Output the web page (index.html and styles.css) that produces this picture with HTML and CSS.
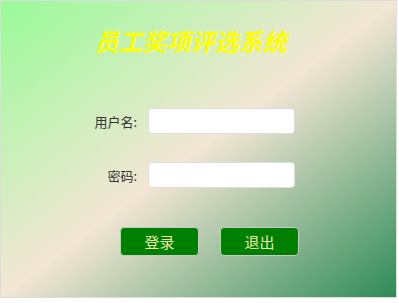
FILE: index.html
```html
<!DOCTYPE html>
<html lang="zh">
<head>
<meta charset="utf-8">
<title>员工奖项评选系统</title>
<link rel="stylesheet" href="styles.css">
</head>
<body>
<div class="panel">
  <h1 class="title">员工奖项评选系统</h1>
  <form class="form">
    <label class="label" for="user">用户名:</label>
    <input class="field" id="user" type="text">
    <label class="label" for="pwd">密码:</label>
    <input class="field" id="pwd" type="password">
  </form>
  <div class="actions">
    <button class="btn" type="button">登录</button>
    <button class="btn" type="button">退出</button>
  </div>
</div>
</body>
</html>
```

FILE: styles.css
```css
html, body {
  margin: 0;
  padding: 0;
  background: #ffffff;
}
body {
  font-family: "Noto Sans CJK SC", "Noto Sans", sans-serif;
}
.panel {
  width: 395px;
  height: 296px;
  border: 1px solid #dcdcdc;
  background: linear-gradient(to bottom right, #98fb98 0%, #f3e6d5 50%, #2e8b57 100%);
  display: flex;
  flex-direction: column;
}
.title {
  margin: 25px 0 0 0;
  padding-left: 94px;
  font-size: 24px;
  line-height: 30px;
  font-weight: bold;
  font-style: italic;
  color: #ffff00;
}
.form {
  margin: 52px 0 0 0;
  display: grid;
  grid-template-columns: 136px 147px;
  column-gap: 11px;
  row-gap: 28px;
  align-items: center;
}
.label {
  text-align: right;
  font-size: 13px;
  color: #333333;
}
.field {
  box-sizing: border-box;
  width: 147px;
  height: 26px;
  margin: 0;
  border: 1px solid #dddddd;
  border-radius: 4px;
  background: #ffffff;
  padding: 0 6px;
}
.actions {
  margin: 39px 0 0 119px;
  display: flex;
  gap: 21px;
}
.btn {
  box-sizing: border-box;
  width: 79px;
  height: 29px;
  border: 1px solid #c8c8c8;
  border-radius: 4px;
  background: #008000;
  color: #eee8aa;
  font-family: "Noto Sans CJK SC", "Noto Sans", sans-serif;
  font-size: 15px;
  padding: 0;
}
```
